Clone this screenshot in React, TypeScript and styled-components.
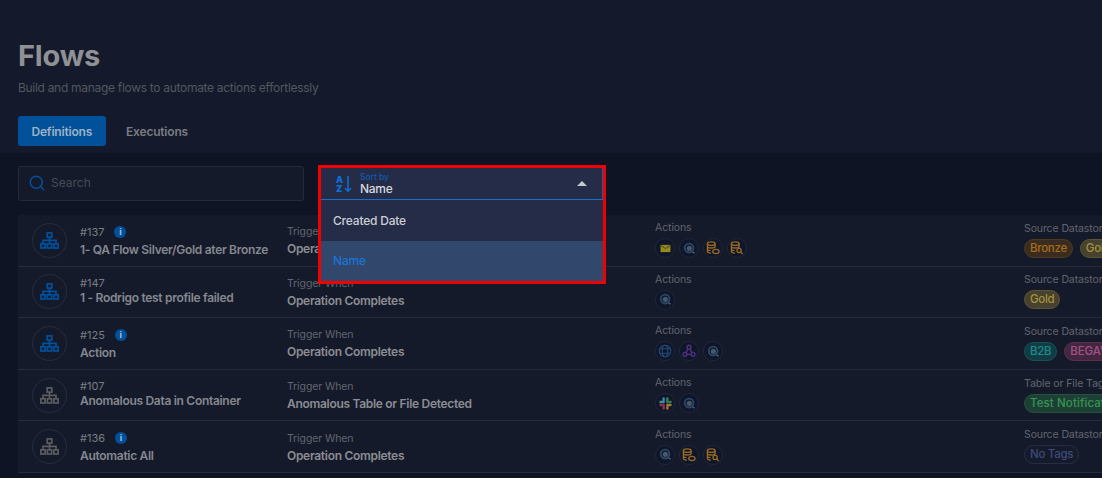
import React from "react";
import styled, { createGlobalStyle } from "styled-components";
import { FiSearch } from "react-icons/fi";

type Tone = "bronze" | "gold" | "teal" | "pink" | "green" | "none";
type ActionKind = "mail" | "scan" | "dbWatch" | "dbSearch" | "globe" | "hook" | "slack";

interface Flow {
	id: number;
	name: string;
	active: boolean;
	info: boolean;
	trigger: string;
	actions: ActionKind[];
	tagLabel: string;
	tags: { label: string; tone: Tone }[];
}

const flows: Flow[] = [
	{
		id: 137,
		name: "1- QA Flow Silver/Gold ater Bronze",
		active: true,
		info: true,
		trigger: "Operation Completes",
		actions: ["mail", "scan", "dbWatch", "dbSearch"],
		tagLabel: "Source Datastore",
		tags: [
			{ label: "Bronze", tone: "bronze" },
			{ label: "Gold", tone: "gold" },
		],
	},
	{
		id: 147,
		name: "1 - Rodrigo test profile failed",
		active: true,
		info: false,
		trigger: "Operation Completes",
		actions: ["scan"],
		tagLabel: "Source Datastore",
		tags: [{ label: "Gold", tone: "gold" }],
	},
	{
		id: 125,
		name: "Action",
		active: true,
		info: true,
		trigger: "Operation Completes",
		actions: ["globe", "hook", "scan"],
		tagLabel: "Source Datastore",
		tags: [
			{ label: "B2B", tone: "teal" },
			{ label: "BEGAWAN", tone: "pink" },
		],
	},
	{
		id: 107,
		name: "Anomalous Data in Container",
		active: false,
		info: false,
		trigger: "Anomalous Table or File Detected",
		actions: ["slack", "scan"],
		tagLabel: "Table or File Tags",
		tags: [{ label: "Test Notification", tone: "green" }],
	},
	{
		id: 136,
		name: "Automatic All",
		active: false,
		info: true,
		trigger: "Operation Completes",
		actions: ["scan", "dbWatch", "dbSearch"],
		tagLabel: "Source Datastore",
		tags: [{ label: "No Tags", tone: "none" }],
	},
];

const toneStyles: Record<Tone, { bg: string; border: string; color: string; spacing: string }> = {
	bronze: { bg: "#3a2c1f", border: "#4f3a20", color: "#a86d1c", spacing: "-0.3px" },
	gold: { bg: "#47422f", border: "#5c5534", color: "#a3913c", spacing: "-0.3px" },
	teal: { bg: "#123c44", border: "#17525a", color: "#1f8c8c", spacing: "-0.3px" },
	pink: { bg: "#44263f", border: "#5a3050", color: "#a0548a", spacing: "-0.1px" },
	green: { bg: "#1d4034", border: "#26523d", color: "#389456", spacing: "0.1px" },
	none: { bg: "#151b2d", border: "#272e44", color: "#3d4a77", spacing: "-0.3px" },
};

const GlobalStyle = createGlobalStyle`
	html, body {
		margin: 0;
		width: 1102px;
		height: 478px;
		overflow: hidden;
		background: #0e1424;
		font-family: "Inter", "Noto Sans", sans-serif;
	}
	* {
		box-sizing: border-box;
	}
`;

const Page = styled.div`
	width: 1102px;
	height: 478px;
	overflow: hidden;
	display: flex;
	flex-direction: column;
`;
const Header = styled.header`
	flex: 0 0 153px;
	background: #141a2b;
	padding: 40px 18px 0;
`;
const Title = styled.h1`
	margin: 0;
	font-size: 29px;
	line-height: 32px;
	font-weight: 700;
	color: #8f9194;
	letter-spacing: -0.2px;
`;
const Subtitle = styled.p`
	margin: 8px 0 0;
	font-size: 12px;
	line-height: 16px;
	color: #53575f;
	letter-spacing: -0.3px;
`;
const Tabs = styled.nav`
	display: flex;
	margin-top: 20px;
`;
const Tab = styled.button<{ $active?: boolean }>`
	all: unset;
	height: 30px;
	padding: 0 13.5px;
	border-radius: 3px;
	display: flex;
	align-items: center;
	font-size: 12px;
	font-weight: 600;
	letter-spacing: -0.2px;
	background: ${(p) => (p.$active ? "#00519a" : "transparent")};
	color: ${(p) => (p.$active ? "#9fb2c5" : "#7a7c82")};
	margin-right: ${(p) => (p.$active ? "7px" : "0")};
`;
const Content = styled.main`
	flex: 1;
	padding: 13px 0 0 18px;
	min-height: 0;
`;
const Toolbar = styled.div`
	display: flex;
	gap: 14px;
	height: 35px;
	margin-bottom: 14px;
	position: relative;
	z-index: 2;
`;
const Search = styled.div`
	width: 286px;
	height: 35px;
	background: #151a2b;
	border: 1px solid #252b3b;
	border-radius: 3px;
	display: flex;
	align-items: center;
	padding: 0 0 2px 9px;
	gap: 5px;
	font-size: 12px;
	color: #474b55;
	svg {
		color: #00519a;
	}
`;
const SelectHighlight = styled.div`
	position: relative;
	width: 288px;
	height: 119px;
	margin-top: -1px;
	border: 3px solid #f00000;
	background: #242c48;
`;
const SelectField = styled.div`
	height: 32px;
	display: flex;
	align-items: center;
	padding-left: 14px;
	border-bottom: 1px solid #1a6fc4;
	border-right: 1px solid #1a5ea8;
`;
const SortIcon = styled.svg`
	flex: none;
	margin-right: 7px;
`;
const SelectText = styled.div`
	display: flex;
	flex-direction: column;
	flex: 1;
	padding-top: 1px;
`;
const SelectCaption = styled.span`
	font-size: 8.5px;
	line-height: 9px;
	color: #0f62b8;
`;
const SelectValue = styled.span`
	font-size: 12px;
	line-height: 14px;
	font-weight: 500;
	color: #d6d9de;
	letter-spacing: -0.3px;
`;
const Caret = styled.span`
	width: 0;
	height: 0;
	margin-right: 15px;
	border-left: 5px solid transparent;
	border-right: 5px solid transparent;
	border-bottom: 5px solid #c4c7cc;
`;
const MenuItem = styled.div<{ $selected?: boolean }>`
	display: flex;
	align-items: center;
	padding: 0 0 ${(p) => (p.$selected ? "2px" : "0")} 12px;
	font-size: 12px;
	font-weight: 500;
	letter-spacing: -0.2px;
	background: ${(p) => (p.$selected ? "#31476b" : "#242c48")};
	color: ${(p) => (p.$selected ? "#1b74d3" : "#ccced3")};
	height: ${(p) => (p.$selected ? "40px" : "41px")};
`;
const List = styled.section`
	background: #151a2b;
	border-radius: 4px 0 0 0;
`;
const Row = styled.article`
	height: 51.6px;
	display: grid;
	grid-template-columns: 48px 207px 368px 369px 1fr;
	align-items: center;
	padding-left: 14px;
	border-bottom: 1px solid #252b3c;
`;
const FlowBadge = styled.div<{ $active: boolean }>`
	width: 35px;
	height: 35px;
	border-radius: 50%;
	border: 1px solid #272d3f;
	display: flex;
	align-items: center;
	justify-content: center;
	color: ${(p) => (p.$active ? "#00509c" : "#5a5c5f")};
`;
const NameStack = styled.div<{ $withInfo: boolean }>`
	display: flex;
	flex-direction: column;
	min-width: 0;
	padding: ${(p) => (p.$withInfo ? "1px 0 0" : "0 0 3px")};
`;
const TriggerStack = styled.div`
	display: flex;
	flex-direction: column;
	min-width: 0;
	padding-top: 1px;
`;
const DetailStack = styled.div`
	display: flex;
	flex-direction: column;
	min-width: 0;
	padding-bottom: 1px;
`;
const IdLine = styled.div`
	display: flex;
	align-items: center;
	gap: 10px;
	font-size: 11px;
	line-height: 14px;
	color: #7b7d82;
`;
const InfoDot = styled.span`
	width: 12px;
	height: 12px;
	border-radius: 50%;
	background: #00519a;
	color: #a8c0dc;
	font-size: 9px;
	font-weight: 700;
	line-height: 12px;
	text-align: center;
`;
const FlowName = styled.div<{ $withInfo: boolean }>`
	margin-top: ${(p) => (p.$withInfo ? "3px" : "0")};
	font-size: 12px;
	line-height: 15px;
	font-weight: 600;
	letter-spacing: -0.3px;
	color: #85888e;
	white-space: nowrap;
`;
const FieldLabel = styled.div`
	font-size: 10.5px;
	line-height: 14px;
	letter-spacing: -0.1px;
	color: #62656c;
	white-space: nowrap;
`;
const FieldValue = styled.div`
	margin-top: 2px;
	font-size: 12px;
	line-height: 15px;
	font-weight: 600;
	letter-spacing: -0.3px;
	color: #8b8d92;
	white-space: nowrap;
`;
const ActionRow = styled.div`
	display: flex;
	gap: 4px;
	margin-top: 3px;
`;
const ActionBubble = styled.div`
	width: 20px;
	height: 20px;
	border-radius: 50%;
	background: #10162a;
	border: 1px solid #20273a;
	display: flex;
	align-items: center;
	justify-content: center;
`;
const TagRow = styled.div`
	display: flex;
	gap: 7px;
	margin-top: 3px;
	white-space: nowrap;
`;
const Tag = styled.span<{ $tone: Tone }>`
	height: 19px;
	padding: 0 5px;
	border-radius: 10px;
	font-size: 11.5px;
	line-height: 17px;
	font-weight: 500;
	letter-spacing: ${(p) => toneStyles[p.$tone].spacing};
	background: ${(p) => toneStyles[p.$tone].bg};
	border: 1px solid ${(p) => toneStyles[p.$tone].border};
	color: ${(p) => toneStyles[p.$tone].color};
`;

function HierarchyIcon() {
	return (
		<svg width="19" height="17" viewBox="0 0 19 17" fill="none" stroke="currentColor" strokeWidth="1.7">
			<rect x="7.2" y="0.9" width="4.6" height="4.2" />
			<path d="M9.5 5v6.5M3 11.5V8.4h13v3.1" />
			<rect x="0.9" y="11.8" width="4.2" height="4.2" />
			<rect x="7.4" y="11.8" width="4.2" height="4.2" />
			<rect x="13.9" y="11.8" width="4.2" height="4.2" />
		</svg>
	);
}

function ActionIcon({ kind }: { kind: ActionKind }) {
	if (kind === "mail") {
		return (
			<svg width="11" height="9" viewBox="0 0 12 10">
				<rect width="11" height="8" x="0.5" y="1" fill="#978a1c" />
				<path d="M0.5 1.5L6 5l5.5-3.5" fill="none" stroke="#3a3722" strokeWidth="1" />
			</svg>
		);
	}
	if (kind === "scan") {
		return (
			<svg width="13" height="13" viewBox="0 0 16 16" fill="none">
				<circle cx="7.5" cy="7.5" r="5.4" stroke="#27496a" strokeWidth="2.2" />
				<circle cx="7.8" cy="7.8" r="3.2" fill="#4c5763" />
				<path d="M11.5 12l2.8 1.8" stroke="#4f5e70" strokeWidth="1.8" />
			</svg>
		);
	}
	if (kind === "dbWatch" || kind === "dbSearch") {
		return (
			<svg width="14" height="14" viewBox="0 0 16 16" fill="none" stroke="#9a6b20" strokeWidth="1.5">
				<ellipse cx="6" cy="3" rx="4.4" ry="1.9" />
				<path d="M1.6 3v9c0 1.1 1.8 1.8 4.2 1.8M10.4 3v4M1.6 6.2c0 1.1 2 1.8 4.4 1.8s4.4-.7 4.4-1.8M1.6 9.2c0 1.1 1.6 1.8 3.6 1.8" />
				{kind === "dbWatch" ? (
					<ellipse cx="11.3" cy="12" rx="3.6" ry="2.4" />
				) : (
					<>
						<circle cx="10.4" cy="10.8" r="2.4" />
						<path d="M12.2 12.6l2.4 2.4" />
					</>
				)}
			</svg>
		);
	}
	if (kind === "globe") {
		return (
			<svg width="14" height="14" viewBox="0 0 16 16" fill="none" stroke="#234c78" strokeWidth="1.2">
				<circle cx="8" cy="8" r="6.6" />
				<ellipse cx="8" cy="8" rx="3.2" ry="6.6" />
				<path d="M2 5.4h12M2 10.6h12" />
			</svg>
		);
	}
	if (kind === "hook") {
		return (
			<svg width="14" height="14" viewBox="0 0 16 16" fill="none" stroke="#4f3280" strokeWidth="1.6">
				<circle cx="8" cy="3.6" r="2.2" />
				<circle cx="3.4" cy="11.8" r="2.2" />
				<circle cx="12.6" cy="11.8" r="2.2" />
				<path d="M7 5.6l-2.6 4.4M9 5.6l2.6 4.4M5.6 11.8h4.8" />
			</svg>
		);
	}
	return (
		<svg width="13" height="13" viewBox="0 0 14 14" fill="none" strokeWidth="2.6" strokeLinecap="round">
			<path d="M5 1.6v1.8M1.6 5.4h3.4" stroke="#3f8a9c" />
			<path d="M9 1.6v3.8M11.6 5.4h.8" stroke="#328259" />
			<path d="M9 12.4v-1.8M12.4 8.6H9" stroke="#a47b29" />
			<path d="M5 12.4V8.6M2.4 8.6h-.8" stroke="#8f324f" />
		</svg>
	);
}

function FlowRow({ flow }: { flow: Flow }) {
	return (
		<Row>
			<FlowBadge $active={flow.active}>
				<HierarchyIcon />
			</FlowBadge>
			<NameStack $withInfo={flow.info}>
				<IdLine>
					#{flow.id}
					{flow.info && <InfoDot>i</InfoDot>}
				</IdLine>
				<FlowName $withInfo={flow.info}>{flow.name}</FlowName>
			</NameStack>
			<TriggerStack>
				<FieldLabel>Trigger When</FieldLabel>
				<FieldValue>{flow.trigger}</FieldValue>
			</TriggerStack>
			<DetailStack>
				<FieldLabel>Actions</FieldLabel>
				<ActionRow>
					{flow.actions.map((kind, i) => (
						<ActionBubble key={i}>
							<ActionIcon kind={kind} />
						</ActionBubble>
					))}
				</ActionRow>
			</DetailStack>
			<DetailStack>
				<FieldLabel>{flow.tagLabel}</FieldLabel>
				<TagRow>
					{flow.tags.map((tag) => (
						<Tag key={tag.label} $tone={tag.tone}>
							{tag.label}
						</Tag>
					))}
				</TagRow>
			</DetailStack>
		</Row>
	);
}

export default function App(): JSX.Element {
	return (
		<Page>
			<GlobalStyle />
			<Header>
				<Title>Flows</Title>
				<Subtitle>Build and manage flows to automate actions effortlessly</Subtitle>
				<Tabs>
					<Tab $active>Definitions</Tab>
					<Tab>Executions</Tab>
				</Tabs>
			</Header>
			<Content>
				<Toolbar>
					<Search>
						<FiSearch size={18} />
						Search
					</Search>
					<SelectHighlight>
						<SelectField>
							<SortIcon width="18" height="18" viewBox="0 0 18 18" fill="none">
								<text x="1" y="8" fontSize="9" fontWeight="900" fill="#0f6fd6" fontFamily="Inter, sans-serif">
									A
								</text>
								<text x="1" y="17" fontSize="9" fontWeight="900" fill="#0f6fd6" fontFamily="Inter, sans-serif">
									Z
								</text>
								<path d="M13 1v15M10 13.2l3 3 3-3" stroke="#0f6fd6" strokeWidth="1.5" />
							</SortIcon>
							<SelectText>
								<SelectCaption>Sort by</SelectCaption>
								<SelectValue>Name</SelectValue>
							</SelectText>
							<Caret />
						</SelectField>
						<MenuItem>Created Date</MenuItem>
						<MenuItem $selected>Name</MenuItem>
					</SelectHighlight>
				</Toolbar>
				<List>
					{flows.map((flow) => (
						<FlowRow key={flow.id} flow={flow} />
					))}
				</List>
			</Content>
		</Page>
	);
}
